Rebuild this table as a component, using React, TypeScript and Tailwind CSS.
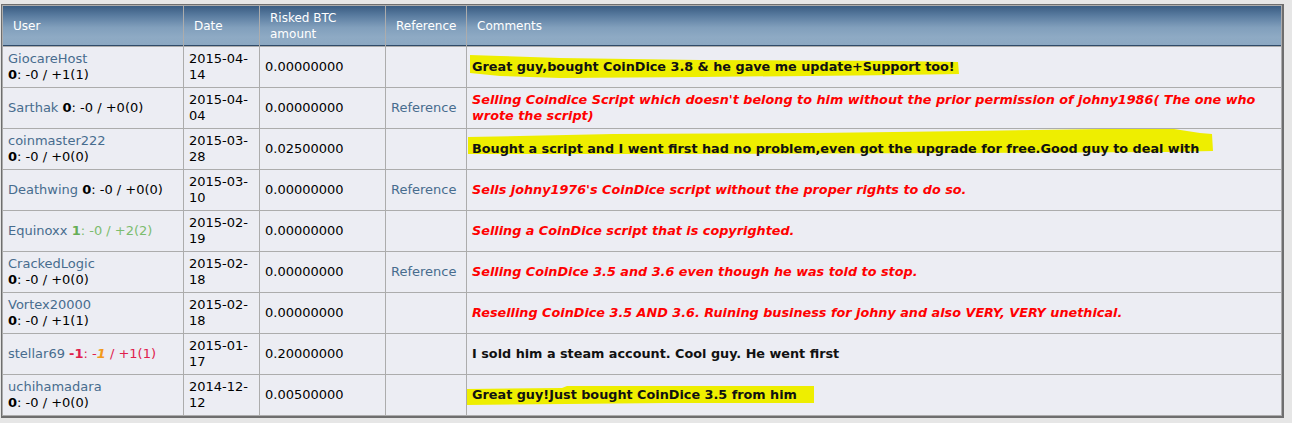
import React from "react";

type Row = {
  user: string;
  wrap: boolean;
  trust: "n0" | "n1" | "green" | "red";
  date: string;
  amt: string;
  ref: boolean;
  comment: React.ReactNode;
  style: "pos" | "neg";
  hl?: string;
};

const rows: Row[] = [
  {
    user: "GiocareHost",
    wrap: true,
    trust: "n1",
    date: "2015-04-14",
    amt: "0.00000000",
    ref: false,
    comment: "Great guy,bought CoinDice 3.8 & he gave me update+Support too!",
    style: "pos",
    hl: "3,8 33,9 93,11 233,13 433,14 491,15 492,27 433,28 233,30 93,31 33,29 3,26",
  },
  {
    user: "Sarthak",
    wrap: false,
    trust: "n0",
    date: "2015-04-04",
    amt: "0.00000000",
    ref: true,
    comment: (
      <>
        Selling Coindice Script which doesn't belong to him without the prior permission of johny1986( The one who
        <br />
        wrote the script)
      </>
    ),
    style: "neg",
  },
  {
    user: "coinmaster222",
    wrap: true,
    trust: "n0",
    date: "2015-03-28",
    amt: "0.02500000",
    ref: false,
    comment: "Bought a script and I went first had no problem,even got the upgrade for free.Good guy to deal with",
    style: "pos",
    hl: "1,8 146,5 350,4 503,2 636,0 707,0 733,4 745,5 746,22 700,23 500,24 200,25 1,25",
  },
  {
    user: "Deathwing",
    wrap: false,
    trust: "n0",
    date: "2015-03-10",
    amt: "0.00000000",
    ref: true,
    comment: "Sells johny1976's CoinDice script without the proper rights to do so.",
    style: "neg",
  },
  {
    user: "Equinoxx",
    wrap: false,
    trust: "green",
    date: "2015-02-19",
    amt: "0.00000000",
    ref: false,
    comment: "Selling a CoinDice script that is copyrighted.",
    style: "neg",
  },
  {
    user: "CrackedLogic",
    wrap: true,
    trust: "n0",
    date: "2015-02-18",
    amt: "0.00000000",
    ref: true,
    comment: "Selling CoinDice 3.5 and 3.6 even though he was told to stop.",
    style: "neg",
  },
  {
    user: "Vortex20000",
    wrap: true,
    trust: "n1",
    date: "2015-02-18",
    amt: "0.00000000",
    ref: false,
    comment: "Reselling CoinDice 3.5 AND 3.6. Ruining business for johny and also VERY, VERY unethical.",
    style: "neg",
  },
  {
    user: "stellar69",
    wrap: false,
    trust: "red",
    date: "2015-01-17",
    amt: "0.20000000",
    ref: false,
    comment: "I sold him a steam account. Cool guy. He went first",
    style: "pos",
  },
  {
    user: "uchihamadara",
    wrap: true,
    trust: "n0",
    date: "2014-12-12",
    amt: "0.00500000",
    ref: false,
    comment: "Great guy!Just bought CoinDice 3.5 from him",
    style: "pos",
    hl: "0,14 95,13 100,11 347,11 347,28 200,28 100,29 0,30",
  },
];

function Trust({ t }: { t: Row["trust"] }) {
  if (t === "green")
    return (
      <span className="text-[#7cbc6e]">
        <b className="text-[#66ad56]">1</b>: -0 / +2(2)
      </span>
    );
  if (t === "red")
    return (
      <span className="text-[#e0204c]">
        <b>-1</b>: -<b className="italic text-[#f29a1c]">1</b> / +1(1)
      </span>
    );
  return (
    <span className="text-black">
      <b>0</b>: -0 / +{t === "n1" ? "1(1)" : "0(0)"}
    </span>
  );
}

const cell = "bg-[#ecedf3] flex items-center px-[5px] text-[13px] leading-4 h-10";

export default function App() {
  return (
    <div className="min-h-screen bg-[#e6e6e6] pt-1 pl-px font-['DejaVu_Sans',Verdana,sans-serif]">
      <div className="w-[1283px] border-l border-t border-r-2 border-b-2 border-[#6e6e6e]">
        <div className="grid grid-cols-[180px_75px_125px_80px_814px] gap-px bg-[#acacac] p-px">
          {["User", "Date", "Risked BTC|amount", "Reference", "Comments"].map((h) => (
            <div
              key={h}
              className="flex h-10 items-center border-b border-[#2f4a68] bg-[linear-gradient(to_bottom,#395c82_0%,#5a7ca0_25%,#819fbc_55%,#8eaac4_80%,#8ca8c2_100%)] pl-[10px] text-[12px] leading-4 text-white"
            >
              <span>
                {h.split("|").map((p, i) => (
                  <React.Fragment key={i}>
                    {i > 0 && <br />}
                    {p}
                  </React.Fragment>
                ))}
              </span>
            </div>
          ))}
          {rows.map((r, i) => (
            <React.Fragment key={i}>
              <div className={cell}>
                <span>
                  <span className="text-[#476c8e]">{r.user}</span>
                  {r.wrap ? <br /> : " "}
                  <Trust t={r.trust} />
                </span>
              </div>
              <div className={cell + " text-black"}>
                <span>
                  {r.date.slice(0, 8)}
                  <br />
                  {r.date.slice(8)}
                </span>
              </div>
              <div className={cell + " text-black"}>{r.amt}</div>
              <div className={cell + " text-[#476c8e]"}>{r.ref ? "Reference" : ""}</div>
              <div className={cell + " relative"}>
                {r.hl && (
                  <svg className="absolute left-0 top-0" width="814" height="40" viewBox="0 0 814 40">
                    <polygon points={r.hl} fill="#eeee00" />
                  </svg>
                )}
                <span
                  className={
                    "relative whitespace-nowrap font-['DejaVu_Sans',Verdana,sans-serif] text-[12.8px] font-bold " +
                    (r.style === "neg" ? "italic text-[#ff0000]" : "text-[#111111]")
                  }
                >
                  {r.comment}
                </span>
              </div>
            </React.Fragment>
          ))}
        </div>
      </div>
    </div>
  );
}
